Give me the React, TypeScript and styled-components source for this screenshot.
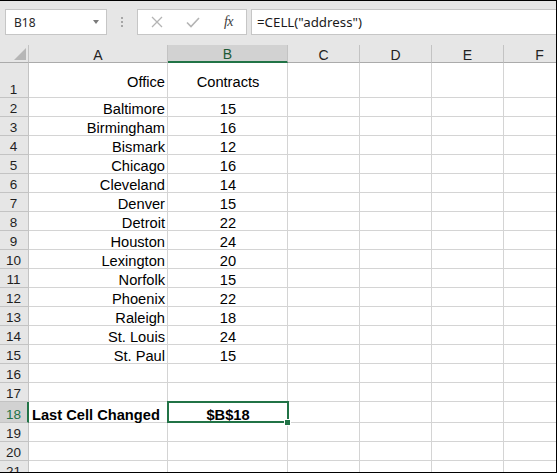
import React from 'react';
import styled, { createGlobalStyle } from 'styled-components';

const Global = createGlobalStyle`
  html, body { margin: 0; padding: 0; background: #fff; }
  body { width: 557px; height: 473px; overflow: hidden; }
`;

const GREEN = '#217346';
const GRID = '#d4d4d4';
const HEAD_BG = '#e6e6e6';
const HEAD_SEL = '#d2d2d2';
const HEAD_LINE = '#c3c3c3';

const Frame = styled.div`
  width: 557px;
  height: 473px;
  box-sizing: border-box;
  border-top: 1px solid #000;
  border-right: 1px solid #000;
  border-bottom: 1px solid #000;
  background: #fff;
  overflow: hidden;
  display: flex;
  flex-direction: column;
  font-family: "Liberation Sans", Arial, sans-serif;
`;

const FormulaBar = styled.div`
  height: 44px;
  flex: none;
  box-sizing: border-box;
  background: ${HEAD_BG};
  display: flex;
  align-items: flex-start;
  padding: 8px 0 0 5px;
  font-family: "Noto Sans", "Open Sans", sans-serif;
`;

const Box = styled.div<{ $w?: number }>`
  height: 26px;
  box-sizing: border-box;
  background: #fff;
  border: 1px solid #c6c6c6;
  display: flex;
  align-items: center;
  flex: ${p => (p.$w ? 'none' : '1')};
  width: ${p => (p.$w ? `${p.$w}px` : 'auto')};
`;

const NameText = styled.span`
  flex: 1;
  padding-left: 8px;
  font-size: 12px;
  color: #262626;
`;

const DropArrow = styled.span`
  width: 0;
  height: 0;
  margin-right: 7px;
  border-left: 3.5px solid transparent;
  border-right: 3.5px solid transparent;
  border-top: 4px solid #7a7a7a;
`;

const Dots = styled.div`
  width: 30px;
  height: 26px;
  display: flex;
  flex-direction: column;
  align-items: center;
  justify-content: center;
  gap: 2px;
  flex: none;
  span {
    width: 2px;
    height: 2px;
    background: #a6a6a6;
  }
`;

const FuncBox = styled(Box)`
  justify-content: space-between;
  padding: 0 13px 0 13px;
  margin-right: 4px;
`;

const Fx = styled.span`
  font-family: "Liberation Serif", "Times New Roman", serif;
  font-style: italic;
  font-size: 14px;
  color: #3c3c3c;
  letter-spacing: -0.5px;
`;

const FormulaText = styled.span`
  padding-left: 5px;
  font-size: 13.3px;
  color: #1a1a1a;
`;

const FormulaBox = styled(Box)`
  border-right: none;
`;

const Sheet = styled.div`
  flex: 1;
  display: flex;
  flex-direction: column;
  overflow: hidden;
`;

const Row = styled.div<{ $h: number }>`
  display: flex;
  flex: none;
  height: ${p => p.$h}px;
`;

const Corner = styled.div`
  width: 29px;
  flex: none;
  box-sizing: border-box;
  background: ${HEAD_BG};
  border-right: 1px solid ${HEAD_LINE};
  border-bottom: 1px solid #ababab;
  display: flex;
  align-items: flex-end;
  justify-content: flex-end;
  padding: 0 2px 2px 0;
`;

const ColHead = styled.div<{ $w: number; $sel?: boolean }>`
  width: ${p => p.$w}px;
  flex: none;
  box-sizing: border-box;
  background: ${p => (p.$sel ? HEAD_SEL : HEAD_BG)};
  border-right: 1px solid ${HEAD_LINE};
  border-bottom: ${p => (p.$sel ? `2px solid ${GREEN}` : '1px solid #ababab')};
  display: flex;
  justify-content: center;
  align-items: center;
  padding-top: 2px;
  font-size: 14px;
  color: ${p => (p.$sel ? '#1d5a36' : '#222')};
`;

const RowHead = styled.div<{ $sel?: boolean }>`
  width: 29px;
  flex: none;
  box-sizing: border-box;
  background: ${p => (p.$sel ? HEAD_SEL : HEAD_BG)};
  border-right: ${p => (p.$sel ? `2px solid ${GREEN}` : `1px solid ${HEAD_LINE}`)};
  border-bottom: 1px solid ${HEAD_LINE};
  display: flex;
  justify-content: center;
  align-items: flex-end;
  padding-right: ${p => (p.$sel ? '0' : '1px')};
  font-size: 13.5px;
  line-height: 14px;
  color: ${p => (p.$sel ? GREEN : '#1f1f1f')};
`;

const Cell = styled.div<{ $w: number; $align: 'left' | 'right' | 'center'; $v: 'center' | 'flex-end'; $bold?: boolean }>`
  position: relative;
  width: ${p => p.$w}px;
  flex: none;
  box-sizing: border-box;
  border-right: 1px solid ${GRID};
  border-bottom: 1px solid ${GRID};
  display: flex;
  align-items: ${p => p.$v};
  justify-content: ${p => (p.$align === 'left' ? 'flex-start' : p.$align === 'right' ? 'flex-end' : 'center')};
  padding: ${p => (p.$v === 'center' ? '4px 2px 0 3px' : '0 2px 0 3px')};
  font-size: 14.67px;
  line-height: 13px;
  font-weight: ${p => (p.$bold ? 700 : 400)};
  color: #000;
  white-space: nowrap;
`;

const Selection = styled.div`
  position: absolute;
  z-index: 2;
  top: -1px;
  left: -1px;
  right: -2px;
  bottom: -1px;
  border: 2px solid ${GREEN};
  pointer-events: none;
`;

const FillHandle = styled.div`
  position: absolute;
  right: -3px;
  bottom: -4px;
  width: 5px;
  height: 5px;
  background: ${GREEN};
  box-shadow: 0 0 0 1px #fff;
`;

const COLS = [
  { key: 'A', w: 139 },
  { key: 'B', w: 120 },
  { key: 'C', w: 72 },
  { key: 'D', w: 72 },
  { key: 'E', w: 72 },
  { key: 'F', w: 72 },
];

type RowData = {
  n: number;
  a?: string;
  b?: string;
  h: number;
  bold?: boolean;
  sel?: boolean;
  v?: 'center' | 'flex-end';
  aAlign?: 'left' | 'right';
};

const offices: [string, string][] = [
  ['Baltimore', '15'],
  ['Birmingham', '16'],
  ['Bismark', '12'],
  ['Chicago', '16'],
  ['Cleveland', '14'],
  ['Denver', '15'],
  ['Detroit', '22'],
  ['Houston', '24'],
  ['Lexington', '20'],
  ['Norfolk', '15'],
  ['Phoenix', '22'],
  ['Raleigh', '18'],
  ['St. Louis', '24'],
  ['St. Paul', '15'],
];

const rows: RowData[] = [
  { n: 1, a: 'Office', b: 'Contracts', h: 35, v: 'center' },
  ...offices.map(([a, b], i) => ({ n: i + 2, a, b, h: 19 })),
  { n: 16, h: 19 },
  { n: 17, h: 19 },
  { n: 18, a: 'Last Cell Changed', b: '$B$18', h: 21, bold: true, sel: true, aAlign: 'left' as const },
  { n: 19, h: 19 },
  { n: 20, h: 19 },
  { n: 21, h: 19 },
];

function CancelIcon() {
  return (
    <svg width="12" height="12" viewBox="0 0 12 12">
      <path d="M1 1 L11 11 M11 1 L1 11" stroke="#b4b4b4" strokeWidth="1.3" fill="none" />
    </svg>
  );
}

function CheckIcon() {
  return (
    <svg width="14" height="11" viewBox="0 0 14 11">
      <path d="M1 5.5 L5 9.5 L13 1" stroke="#b4b4b4" strokeWidth="1.6" fill="none" />
    </svg>
  );
}

function CornerTriangle() {
  return (
    <svg width="12" height="12" viewBox="0 0 12 12">
      <path d="M12 0 L12 12 L0 12 Z" fill="#b6b6b6" />
    </svg>
  );
}

export default function App() {
  return (
    <>
      <Global />
      <Frame>
        <FormulaBar>
          <Box $w={102}>
            <NameText>B18</NameText>
            <DropArrow />
          </Box>
          <Dots>
            <span />
            <span />
            <span />
          </Dots>
          <FuncBox $w={110}>
            <CancelIcon />
            <CheckIcon />
            <Fx>fx</Fx>
          </FuncBox>
          <FormulaBox>
            <FormulaText>=CELL("address")</FormulaText>
          </FormulaBox>
        </FormulaBar>
        <Sheet>
          <Row $h={18}>
            <Corner>
              <CornerTriangle />
            </Corner>
            {COLS.map(c => (
              <ColHead key={c.key} $w={c.w} $sel={c.key === 'B'}>
                {c.key}
              </ColHead>
            ))}
          </Row>
          {rows.map(r => (
            <Row key={r.n} $h={r.h}>
              <RowHead $sel={r.sel}>{r.n}</RowHead>
              {COLS.map(c => {
                const v = r.v ?? 'flex-end';
                if (c.key === 'A') {
                  return (
                    <Cell key={c.key} $w={c.w} $align={r.aAlign ?? 'right'} $v={v} $bold={r.bold}>
                      {r.a}
                    </Cell>
                  );
                }
                if (c.key === 'B') {
                  return (
                    <Cell key={c.key} $w={c.w} $align="center" $v={v} $bold={r.bold}>
                      {r.b}
                      {r.sel && (
                        <Selection>
                          <FillHandle />
                        </Selection>
                      )}
                    </Cell>
                  );
                }
                return <Cell key={c.key} $w={c.w} $align="left" $v={v} />;
              })}
            </Row>
          ))}
        </Sheet>
      </Frame>
    </>
  );
}
